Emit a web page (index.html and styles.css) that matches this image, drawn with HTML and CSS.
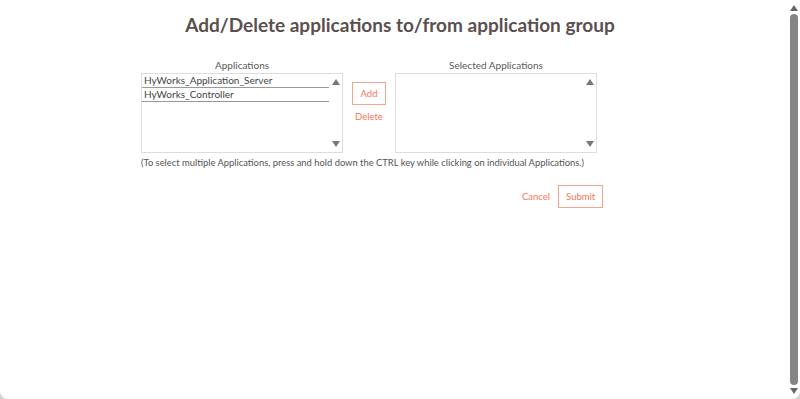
FILE: index.html
```html
<!DOCTYPE html>
<html lang="en">
<head>
  <meta charset="UTF-8" />
  <meta name="viewport" content="width=device-width, initial-scale=1.0"/>
  <title>Application Group</title>
  <link rel="stylesheet" href="styles.css">
</head>
<body>
  <div class="dialog">
    <h1 class="title">Add/Delete applications to/from application group</h1>

    <div class="picker">
      <div class="list-col">
        <div class="list-label">Applications</div>
        <div class="listbox">
          <div class="options">
            <div class="option">HyWorks_Application_Server</div>
            <div class="option">HyWorks_Controller</div>
          </div>
          <div class="list-scroll">
            <span class="arrow up"></span>
            <span class="arrow down"></span>
          </div>
        </div>
      </div>

      <div class="actions">
        <button class="btn-outline">Add</button>
        <button class="btn-link">Delete</button>
      </div>

      <div class="list-col">
        <div class="list-label">Selected Applications</div>
        <div class="listbox">
          <div class="options"></div>
          <div class="list-scroll">
            <span class="arrow up"></span>
            <span class="arrow down"></span>
          </div>
        </div>
      </div>
    </div>

    <p class="hint">(To select multiple Applications, press and hold down the CTRL key while clicking on individual Applications.)</p>

    <div class="footer">
      <button class="btn-link">Cancel</button>
      <button class="btn-outline">Submit</button>
    </div>

    <div class="page-scroll">
      <span class="arrow up"></span>
      <span class="thumb"></span>
      <span class="arrow down"></span>
    </div>
  </div>
</body>
</html>
```

FILE: styles.css
```css
body {
  margin: 0;
  background-color: #d4d4d4;
  font-family: 'Lato', sans-serif;
  color: #555;
}

.dialog {
  position: relative;
  height: 399px;
  background-color: #fff;
  border-radius: 0 0 8px 8px;
  overflow: hidden;
}

.title {
  margin: 0;
  padding-top: 13px;
  text-align: center;
  font-size: 19px;
  line-height: 24px;
  font-weight: 700;
  color: #5b4f4f;
}

.picker {
  display: flex;
  align-items: flex-start;
  margin-top: 21px;
  padding-left: 141px;
}

.list-col {
  width: 202px;
}

.list-label {
  text-align: center;
  font-size: 10px;
  line-height: 14px;
  margin-bottom: 1px;
  color: #5a5a5a;
}

.listbox {
  display: flex;
  height: 78px;
  border: 1px solid #ddd;
}

.options {
  flex: 1;
}

.option {
  font-size: 10px;
  line-height: 13px;
  padding-left: 2px;
  border-bottom: 1px solid #999;
  color: #444;
}

.list-scroll {
  width: 13px;
  display: flex;
  flex-direction: column;
  justify-content: space-between;
  align-items: center;
  padding: 5px 0;
}

.arrow {
  width: 0;
  height: 0;
  border-left: 4px solid transparent;
  border-right: 4px solid transparent;
}

.arrow.up {
  border-bottom: 6px solid #777;
}

.arrow.down {
  border-top: 6px solid #777;
}

.actions {
  width: 52px;
  display: flex;
  flex-direction: column;
  align-items: center;
  padding-top: 24px;
  gap: 6px;
}

button {
  font-family: 'Lato', sans-serif;
  font-size: 9.5px;
  color: #f07858;
  background-color: #fff;
  cursor: pointer;
}

.btn-outline {
  height: 23px;
  padding: 0 8px;
  border: 1px solid #f0a590;
}

.btn-link {
  border: none;
  padding: 0;
}

.hint {
  margin: 4px 0 0 141px;
  font-size: 9.4px;
  line-height: 12px;
}

.footer {
  display: flex;
  align-items: center;
  gap: 8px;
  margin-top: 16px;
  padding-left: 522px;
}

.footer .btn-outline {
  height: 23px;
  padding: 0 7px;
}

.page-scroll {
  position: absolute;
  top: 0;
  right: 2px;
  bottom: 0;
  width: 9px;
  display: flex;
  flex-direction: column;
  align-items: center;
  padding: 5px 0;
  gap: 3px;
}

.page-scroll .thumb {
  flex: 1;
  width: 8px;
  border-radius: 4px;
  background-color: #858585;
}

.page-scroll .arrow.up {
  border-bottom-color: #666;
}

.page-scroll .arrow.down {
  border-top-color: #666;
}
```
